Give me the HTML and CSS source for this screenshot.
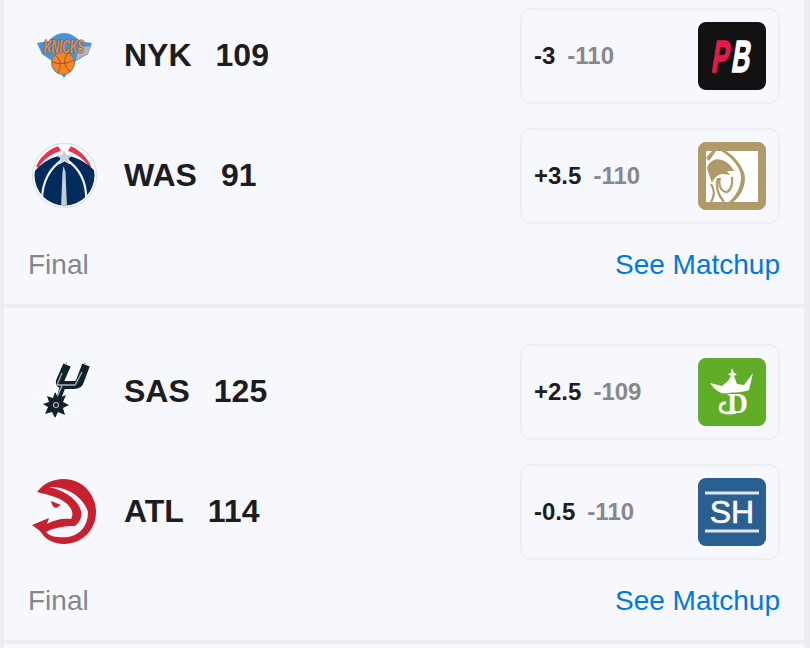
FILE: index.html
```html
<!DOCTYPE html>
<html lang="en">
<head>
<meta charset="utf-8">
<title>Scores</title>
<link rel="stylesheet" href="styles.css">
</head>
<body>
<main class="feed">
  <section class="game game-first">
    <div class="row">
      <div class="team">
        <svg class="team-logo" viewBox="28 20 72 72" aria-label="Knicks">
          <path fill="#4a93d6" d="M37 43 L49 41 Q55 33 64 33 Q73 33 79 41 L92 43 L88 54 L76 61 L64 78 L52 61 L42 54 Z"/>
          <path fill="#aeb6bf" d="M78 48 L90 46 L88 53 L76 60 Z"/>
          <circle cx="63" cy="63" r="11.500" fill="#f58426" stroke="#3a7fc0" stroke-width=".8"/>
          <path fill="none" stroke="#8f4a12" stroke-width=".8" d="M55 55 Q64 62 58 73 M68 52.500 Q60 62 70 72 M52 62 Q63 66 74 60"/>
          <text class="knicks-word" transform="translate(43.500 52.500) scale(1 1.700)" textLength="41" lengthAdjust="spacingAndGlyphs">KNICKS</text>
        </svg>
        <span class="abbr">NYK</span><span class="score">109</span>
      </div>
      <div class="odds">
        <span class="line">-3</span><span class="price">-110</span>
        <svg class="book" viewBox="698 22 68 68" aria-label="PointsBet">
          <rect x="698" y="22" width="68" height="68" rx="8" fill="#111112"/>
          <text class="pb pb-p" transform="translate(710.500 71.500) skewX(-9) scale(.56 1)">P</text>
          <text class="pb pb-b" transform="translate(730.500 71.500) skewX(-9) scale(.56 1)">B</text>
        </svg>
      </div>
    </div>
    <div class="row">
      <div class="team">
        <svg class="team-logo" viewBox="28 140 72 72" aria-label="Wizards">
          <defs><clipPath id="wiz"><circle cx="64.500" cy="175.500" r="30"/></clipPath></defs>
          <circle cx="64.500" cy="175.500" r="32" fill="#fff" stroke="#dfe1e6" stroke-width="1.300"/>
          <g clip-path="url(#wiz)">
            <path fill="#e8344e" d="M36 166 C42 154 52 148 58 146 L61 151 C52 153 44 159 38 168 Z M91 166 C86 155 77 149 71 146 L68 151 C76 153 85 160 90 168 Z"/>
            <path fill="#002b5c" d="M34 172 C42 162 52 157 60 156 L68 156 C78 157 88 164 96 172 L96 210 L34 210 Z"/>
            <path fill="none" stroke="#f2f4f7" stroke-width="2.200" d="M62 160 C50 168 42 182 42 200 M67 160 C79 168 87 182 86 200"/>
            <path fill="#c4ced4" d="M63.500 166 L65.500 172 L67 208 L61 208 L62.500 172 Z"/>
          </g>
          <path fill="#c4ced4" stroke="#fff" stroke-width=".8" d="M64 149 L66.500 154.500 L73 154 L68 158.500 L70 164 L64.500 161 L59 164 L61 158.500 L56 154 L62 154.500 Z"/>
        </svg>
        <span class="abbr">WAS</span><span class="score">91</span>
      </div>
      <div class="odds">
        <span class="line">+3.5</span><span class="price">-110</span>
        <svg class="book" viewBox="698 142 68 68" aria-label="BetMGM">
          <rect x="698" y="142" width="68" height="68" rx="8" fill="#b09a69"/>
          <rect x="706" y="151" width="52" height="51" fill="#fff"/>
          <path fill="#b09a69" d="M721 151 L726 151 C737 158 745 170 745 178 C745 188 740 197 733 202 L729 202 C736 196 741 187 741 177 C741 168 732 157 721 151 Z"/>
          <path fill="#b09a69" d="M707 168 C710 160 716 158 722 160 C728 162 732 167 734 171 L727 171 L730 175 L723 174 C718 174 714 178 712 183 C710 177 708 172 707 168 Z"/>
          <path fill="#b09a69" d="M706 158 L712 151 L716 151 L709 161 Z"/>
          <path fill="none" stroke="#b09a69" stroke-width="2.200" d="M711 184 C715 190 714 197 711 202 M718 178 C715 187 719 196 724 202 M720 178 C718 185 721 192 727 192 C731 190 733 184 732 177"/>
        </svg>
      </div>
    </div>
    <div class="foot"><span class="status">Final</span><a class="matchup">See Matchup</a></div>
  </section>

  <section class="game">
    <div class="row">
      <div class="team">
        <svg class="team-logo" viewBox="28 356 72 72" aria-label="Spurs">
          <path fill="#fff" d="M56 382 L60 395 L73 397 L64 405 L74 414 L62 412 L57 423 L52 412 L40 416 L47 406 L38 397 L50 396 Z"/>
          <path fill="none" stroke="#fff" stroke-width="10" stroke-linejoin="round" d="M67 365 L60 381 Q59 385 64 385 L74 385 Q79 385 80 381 L86 365"/>
          <path fill="none" stroke="#11222a" stroke-width="8" stroke-linejoin="round" d="M67 365 L60 381 Q59 385 64 385 L74 385 Q79 385 80 381 L86 365"/>
          <path fill="#11222a" d="M66 386 L61 399 L56 399 L60 386 Z"/>
          <path fill="none" stroke="#aeb6ba" stroke-width="1.300" d="M62 373 L57 385 L75 385 L82 372 M62 386 L57 397"/>
          <path fill="#aeb6ba" d="M65 362.500 h2 v2 h-2 Z M84 362.500 h2 v2 h-2 Z"/>
          <path fill="#11222a" d="M55 392 L58.500 398 L66 395 L63 402 L69 405 L63 408 L65 415 L58 412 L55 418 L52 412 L45 414 L48 407 L43 404 L49 402 L47 396 L53 398 Z"/>
          <circle cx="56" cy="405" r="2.500" fill="none" stroke="#aeb6ba" stroke-width="1.100"/>
        </svg>
        <span class="abbr">SAS</span><span class="score">125</span>
      </div>
      <div class="odds">
        <span class="line">+2.5</span><span class="price">-109</span>
        <svg class="book" viewBox="698 358 68 68" aria-label="DraftKings">
          <rect x="698" y="358" width="68" height="68" rx="8" fill="#60ae27"/>
          <path fill="#fff" d="M710 383 L722 386 L728 381 L731 376 L728 374 L731 373 L732 368 L734 373 L737 374 L734 376 L737 384 L744 385 L753 373 L749 390 C742 393 734 392 728 393 C721 395 715 390 710 383 Z"/>
          <path fill="none" stroke="#fff" stroke-width="3" d="M726 403 C720 402 718 410 723 412 C727 414 731 413 736 412"/>
          <text class="dk" x="727" y="413">D</text>
        </svg>
      </div>
    </div>
    <div class="row">
      <div class="team">
        <svg class="team-logo" viewBox="28 476 72 72" aria-label="Hawks">
          <path fill="#c8202f" fill-rule="evenodd" d="M37 492 C43 484 52 479 64 479 C82 479 96 494 96 512 C96 530 82 544 64 544 C53 544 45 539 40 531 L32 525 L49 518 L47 524 C54 520 62 518 71 519 C74 514 72 508 66 503 C60 498 50 495 37 492 Z M49 487 C64 486 83 495 88 512 C88 526 80 535 68 537 C60 538 50 537 46 532 C55 527 66 526 75 526 C81 521 83 515 80 508 C75 497 62 490 49 487 Z"/>
          <path fill="#c8202f" d="M51 501 L61 505 L56 508 Q52 507 51 501 Z"/>
        </svg>
        <span class="abbr">ATL</span><span class="score">114</span>
      </div>
      <div class="odds">
        <span class="line">-0.5</span><span class="price">-110</span>
        <svg class="book" viewBox="698 478 68 68" aria-label="SuperBook">
          <rect x="698" y="478" width="68" height="68" rx="8" fill="#2a5f91"/>
          <path stroke="#dfe6ee" stroke-width="3" d="M705 493 H759 M705 531 H759"/>
          <text class="sh" x="732" y="523" text-anchor="middle">SH</text>
        </svg>
      </div>
    </div>
    <div class="foot"><span class="status">Final</span><a class="matchup">See Matchup</a></div>
  </section>

  <section class="game game-next"></section>
</main>
</body>
</html>
```
FILE: styles.css
```css
html, body {
  margin: 0;
  padding: 0;
  height: 648px;
  overflow: hidden;
  background: #ecedf3;
}
body {
  font-family: "Liberation Sans", Arial, sans-serif;
  color: #1c1d21;
}
.feed {
  display: flex;
  flex-direction: column;
  gap: 4px;
  padding: 0 6px 0 4px;
}
.game {
  display: flex;
  flex-direction: column;
  gap: 24px;
  padding: 36px 24px 24px;
  background: #f7f8fd;
}
.game-first {
  padding-top: 8px;
}
.game-next {
  height: 4px;
  padding: 0;
}
.row {
  display: flex;
  align-items: center;
  justify-content: space-between;
  height: 96px;
}
.team {
  display: flex;
  align-items: center;
  gap: 24px;
  font-size: 32px;
  line-height: 40px;
  font-weight: 700;
}
.abbr, .score {
  padding-bottom: 2px;
}
.team-logo {
  width: 72px;
  height: 72px;
  flex: none;
}
.odds {
  box-sizing: border-box;
  display: flex;
  align-items: center;
  gap: 12px;
  width: 260px;
  height: 96px;
  padding: 0 12px;
  border: 2px solid #eeeff4;
  border-radius: 10px;
  font-size: 24px;
  font-weight: 700;
}
.price {
  color: #87878c;
}
.book {
  width: 68px;
  height: 68px;
  margin-left: auto;
  flex: none;
}
.foot {
  display: flex;
  justify-content: space-between;
  height: 32px;
  font-size: 28px;
  line-height: 34px;
}
.status {
  color: #85868b;
}
.matchup {
  color: #0077e6;
}
.knicks-word {
  font: 700 italic 10.500px "Liberation Sans", sans-serif;
  fill: #f58426;
  stroke: #2a6aa8;
  stroke-width: .7px;
  paint-order: stroke;
}
.pb {
  font: 700 45px "Liberation Sans", sans-serif;
  stroke-width: 1.600px;
}
.pb-p {
  fill: #e8194a;
  stroke: #e8194a;
}
.pb-b {
  fill: #fff;
  stroke: #fff;
}
.dk {
  font: 700 29px "Liberation Serif", serif;
  fill: #fff;
}
.sh {
  font: 400 32px "Liberation Sans", sans-serif;
  fill: #fff;
  stroke: #fff;
  stroke-width: .6px;
}
```
